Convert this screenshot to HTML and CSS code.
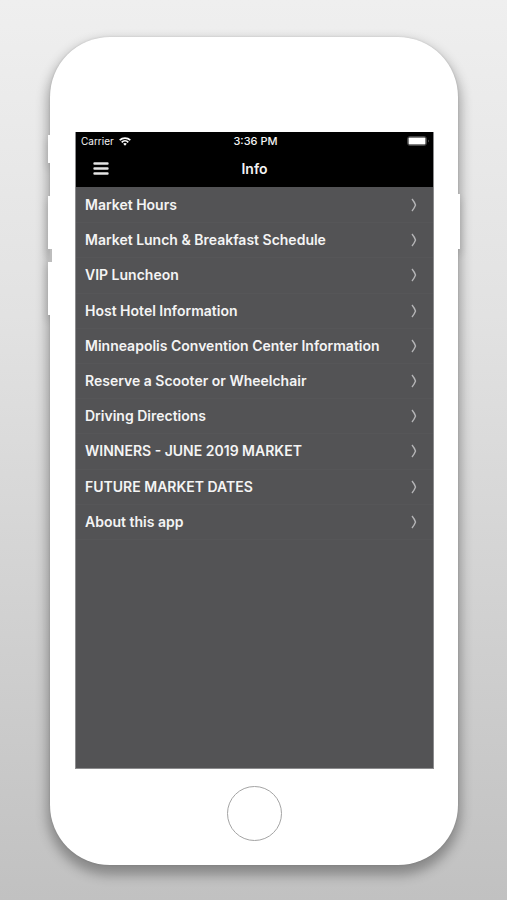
FILE: index.html
```html
<!DOCTYPE html>
<html lang="en">
<head>
<meta charset="utf-8">
<meta name="viewport" content="width=device-width, initial-scale=1">
<title>Info</title>
<link rel="stylesheet" href="styles.css">
</head>
<body>
<div class="phone">
  <span class="key key-mute"></span>
  <span class="key-gap"></span>
  <span class="key key-up"></span>
  <span class="key key-down"></span>
  <span class="key key-power"></span>
  <main class="screen">
    <header class="top">
      <div class="status">
        <span class="carrier">Carrier
          <svg class="wifi" viewBox="0 0 12 9" aria-hidden="true"><path d="M.7 3.2a7.6 7.6 0 0 1 10.600 0M2.700 5.300a4.700 4.700 0 0 1 6.600 0" fill="none" stroke="#fff" stroke-width="1.700"/><path d="M4.200 6.800a2.600 2.600 0 0 1 3.600 0L6 8.800z" fill="#fff"/></svg>
        </span>
        <span class="time">3:36 PM</span>
        <svg class="battery" viewBox="0 0 23 10" aria-hidden="true"><rect x=".5" y=".5" width="19" height="9" rx="2.5" fill="none" stroke="#444"/><rect x="1.5" y="1.5" width="17" height="7" rx="1" fill="#fff"/><path d="M21 3.500q1.500 1.500 0 3z" fill="#777"/></svg>
      </div>
      <div class="nav">
        <button class="menu" type="button" aria-label="Menu"><svg viewBox="0 0 16 13" aria-hidden="true"><path d="M1.500 1.500h13M1.500 6.500h13M1.500 11.500h13" stroke="#e4e4e4" stroke-width="2.400" stroke-linecap="round"/></svg></button>
        <h1>Info</h1>
      </div>
    </header>
    <nav class="list">
      <a href="#hours">Market Hours<svg viewBox="0 0 6 14" aria-hidden="true"><path d="M1 1q2.500 3 3.500 6-1 3-3.500 6"/></svg></a>
      <a href="#schedule">Market Lunch &amp; Breakfast Schedule<svg viewBox="0 0 6 14" aria-hidden="true"><path d="M1 1q2.500 3 3.500 6-1 3-3.500 6"/></svg></a>
      <a href="#vip">VIP Luncheon<svg viewBox="0 0 6 14" aria-hidden="true"><path d="M1 1q2.500 3 3.500 6-1 3-3.500 6"/></svg></a>
      <a href="#hotel">Host Hotel Information<svg viewBox="0 0 6 14" aria-hidden="true"><path d="M1 1q2.500 3 3.500 6-1 3-3.500 6"/></svg></a>
      <a href="#center">Minneapolis Convention Center Information<svg viewBox="0 0 6 14" aria-hidden="true"><path d="M1 1q2.500 3 3.500 6-1 3-3.500 6"/></svg></a>
      <a href="#reserve">Reserve a Scooter or Wheelchair<svg viewBox="0 0 6 14" aria-hidden="true"><path d="M1 1q2.500 3 3.500 6-1 3-3.500 6"/></svg></a>
      <a href="#directions">Driving Directions<svg viewBox="0 0 6 14" aria-hidden="true"><path d="M1 1q2.500 3 3.500 6-1 3-3.500 6"/></svg></a>
      <a href="#winners">WINNERS - JUNE 2019 MARKET<svg viewBox="0 0 6 14" aria-hidden="true"><path d="M1 1q2.500 3 3.500 6-1 3-3.500 6"/></svg></a>
      <a href="#dates">FUTURE MARKET DATES<svg viewBox="0 0 6 14" aria-hidden="true"><path d="M1 1q2.500 3 3.500 6-1 3-3.500 6"/></svg></a>
      <a href="#about">About this app<svg viewBox="0 0 6 14" aria-hidden="true"><path d="M1 1q2.500 3 3.500 6-1 3-3.500 6"/></svg></a>
    </nav>
  </main>
  <button class="home" type="button" aria-label="Home"></button>
</div>
</body>
</html>
```
FILE: styles.css
```css
* {
  box-sizing: border-box;
}

body {
  margin: 0;
  min-height: 100vh;
  display: flex;
  padding: 37px 49px 35px 50px;
  background: linear-gradient(#efefef, #e2e2e2 35%, #c1c1c1);
  font-family: Inter, "Liberation Sans", sans-serif;
  color: #f4f4f4;
}

.phone {
  position: relative;
  flex: 1;
  display: flex;
  flex-direction: column;
  align-items: center;
  padding: 95px 24px 24px 25px;
  background: #fff;
  border-radius: 60px;
  box-shadow: 0 0 2px rgba(0, 0, 0, .15), 0 7px 12px 3px rgba(0, 0, 0, .3);
}

/* Side keys stick out of the case edge; the clip keeps their shadow off the case */
.key {
  position: absolute;
  left: -2px;
  width: 4px;
  height: 53px;
  background: #fff;
  box-shadow: 0 5px 8px rgba(0, 0, 0, .2);
  clip-path: inset(-16px 2px -16px -16px);
}

.key-mute {
  top: 98px;
  height: 28px;
}

.key-up {
  top: 159px;
}

.key-down {
  top: 225px;
}

.key-power {
  top: 157px;
  left: auto;
  right: -2px;
  height: 55px;
  clip-path: inset(-16px -16px -16px 2px);
}

.key-gap {
  position: absolute;
  top: 212px;
  left: -2px;
  width: 4px;
  height: 13px;
  background: #bdbdbd;
}

.screen {
  align-self: stretch;
  flex: 1;
  background: #535355;
  border: 1px solid #8c8c8e;
  border-top: 0;
}

.top {
  background: #000;
}

.status {
  display: grid;
  grid-template-columns: 1fr auto 1fr;
  align-items: center;
  height: 18px;
  padding: 0 3px 0 5px;
  font-size: 10px;
  line-height: 16px;
}

.carrier {
  display: flex;
  align-items: center;
  gap: 5px;
}

.wifi {
  width: 12px;
  height: 9px;
}

.time {
  font-size: 11px;
  font-weight: 500;
}

.battery {
  justify-self: end;
  width: 23px;
  height: 10px;
}

.nav {
  display: grid;
  grid-template-columns: 1fr auto 1fr;
  align-items: center;
  height: 37px;
  padding: 0 17px;
}

.menu {
  justify-self: start;
  display: flex;
  padding: 0;
  border: 0;
  background: none;
}

.menu svg {
  width: 16px;
  height: 13px;
}

h1 {
  margin: 0;
  font-size: 14px;
  line-height: 20px;
  font-weight: 600;
}

.list {
  display: grid;
  grid-auto-rows: 1fr;
  min-height: 353px;
  padding-top: 1px;
}

.list a {
  display: flex;
  align-items: center;
  justify-content: space-between;
  padding: 0 16px 0 9px;
  border-bottom: 1px solid #565658;
  color: inherit;
  font-size: 14px;
  line-height: 20px;
  font-weight: 600;
  text-decoration: none;
}

.list svg {
  width: 6px;
  height: 14px;
  fill: none;
  stroke: #b4b4b6;
  stroke-width: 1.4;
}

.home {
  width: 55px;
  height: 55px;
  margin-top: 17px;
  padding: 0;
  border: 1px solid #a4a4a4;
  border-radius: 50%;
  background: #fff;
}
```
